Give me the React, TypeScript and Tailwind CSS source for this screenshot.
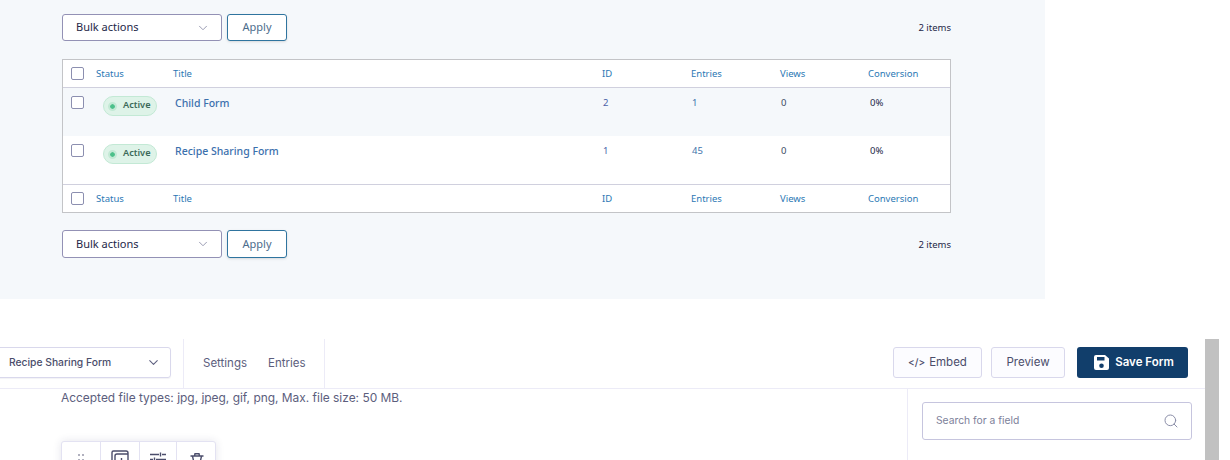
import { ChevronDown, Search } from 'lucide-react';

const columns = 'grid grid-cols-[33px_77px_429px_89px_89px_88px_1fr]';

const forms = [
  { title: 'Child Form', id: '2', entries: '1', views: '0', conversion: '0%', striped: true },
  { title: 'Recipe Sharing Form', id: '1', entries: '45', views: '0', conversion: '0%', striped: false },
];

function Checkbox() {
  return <span className="block ml-[8px] w-[13px] h-[13px] bg-white rounded-[2px] border border-[#8c8fb0]" />;
}

function Toolbar({ className, height, countClass }: { className: string; height: string; countClass: string }) {
  return (
    <div className={`flex items-center pr-[94px] ${className}`}>
      <div className={`flex items-center justify-between w-[160px] ${height} bg-white border border-[#9391b5] rounded-[3px] pl-[13px] pr-[11px] text-[11px] text-[#242748]`}>
        <span>Bulk actions</span>
        <ChevronDown size={14} strokeWidth={1.5} className="text-[#8b8ea8]" />
      </div>
      <button className={`ml-[5px] w-[60px] ${height} bg-white border border-[#2f749f] rounded-[3px] text-[11px] text-[#4c6c8c] shadow-sm`}>
        Apply
      </button>
      <span className={`ml-auto text-[9.5px] text-[#242748] ${countClass}`}>2 items</span>
    </div>
  );
}

function HeaderRow({ className }: { className: string }) {
  return (
    <div className={`${columns} items-center h-[28px] text-[9.5px] text-[#2b78b4] ${className}`}>
      <Checkbox />
      <span className="pt-[2px]">Status</span>
      <span className="pt-[2px]">Title</span>
      <span className="pt-[2px]">ID</span>
      <span className="pt-[2px]">Entries</span>
      <span className="pt-[2px]">Views</span>
      <span className="pt-[2px]">Conversion</span>
    </div>
  );
}

function FormRow({ form }: { form: (typeof forms)[number] }) {
  return (
    <div className={`${columns} h-[48px] pt-[8px] text-[9.5px] ${form.striped ? 'bg-[#f5f8fb]' : 'bg-white'}`}>
      <Checkbox />
      <div className="pl-[7px]">
        <span className="flex items-center w-[54px] h-[20px] bg-[#def3e8] border border-[#c3e9d5] rounded-full pl-[6px] pb-[2px] text-[9.2px] font-semibold text-[#3c6a5a]">
          <span className="w-[5px] h-[5px] mt-[2px] mr-[8px] rounded-full bg-[#4cc08a] outline-2 outline-[#c3e9d5]" />
          Active
        </span>
      </div>
      <span className="pl-[2px] text-[10.5px] font-medium text-[#3b70ad] leading-[14px]">{form.title}</span>
      <span className="pl-[1px] leading-[14px] text-[#4a63a8]">{form.id}</span>
      <span className="pl-[1px] leading-[14px] text-[#3e73ab]">{form.entries}</span>
      <span className="pl-[1px] leading-[14px] text-[#3c4a63]">{form.views}</span>
      <span className="pl-[2px] leading-[14px] text-[#242748]">{form.conversion}</span>
    </div>
  );
}

function ToolButton({ children, wide }: { children: React.ReactNode; wide?: boolean }) {
  return (
    <div className={`flex justify-center h-[40px] border-r border-[#e3e2f2] last:border-r-0 ${wide ? 'w-[39px]' : 'w-[38px]'}`}>
      {children}
    </div>
  );
}

export default function App() {
  return (
    <div className="w-[1230px] h-[460px] overflow-hidden bg-white font-['Inter',sans-serif]">
      {/* Forms list */}
      <div className="w-[1045px] h-[299px] pl-[62px] pt-[14px] bg-[#f5f8fb] font-['Noto_Sans',sans-serif]">
        <Toolbar className="" height="h-[27px]" countClass="pt-[2px]" />
        <div className="w-[889px] mt-[18px] bg-white border border-[#c3c4c7]">
          <HeaderRow className="border-b border-[#d0d0de]" />
          {forms.map((form) => (
            <FormRow key={form.id} form={form} />
          ))}
          <HeaderRow className="border-t border-[#d0d0de]" />
        </div>
        <Toolbar className="mt-[17px]" height="h-[28px]" countClass="pt-[3px]" />
      </div>

      {/* Form editor */}
      <div className="flex mt-[40px] h-[121px]">
        <div className="w-[1205px] shrink-0">
          <div className="flex items-center h-[50px] border-b border-[#ecebf7]">
            <div className="flex items-center justify-between w-[180px] h-[31px] -ml-[9px] mb-[2px] shrink-0 border border-[#d9d8ec] rounded-[3px] pl-[17px] pr-[9px] text-[10.3px] font-medium text-[#4b4d6b] shadow-[0_1px_1px_rgba(40,40,90,0.06)]">
              <span>Recipe Sharing Form</span>
              <ChevronDown size={15} strokeWidth={1.7} className="text-[#5f6180]" />
            </div>
            <div className="flex items-center gap-[21px] h-full ml-[12px] w-[142px] pl-[19px] border-x border-[#ecebf7] text-[11.5px] text-[#5c5e7d]">
              <span>Settings</span>
              <span>Entries</span>
            </div>
            <div className="flex items-center ml-auto mb-[2px] pr-[17px] text-[11.5px] text-[#4b4d6b]">
              <button className="flex items-center justify-center gap-[4px] w-[89px] h-[31px] bg-[#fcfcff] border border-[#d9d8ec] rounded-[3px]">
                <span className="text-[10px] font-medium">&lt;/&gt;</span>
                Embed
              </button>
              <button className="ml-[9px] w-[74px] h-[31px] bg-[#fcfcff] border border-[#d9d8ec] rounded-[3px]">Preview</button>
              <button className="flex items-center justify-center gap-[6px] ml-[12px] pl-[3px] w-[111px] h-[31px] bg-[#113e6b] rounded-[3px] font-semibold text-white">
                <svg width="15" height="15" viewBox="0 0 15 15" fill="white">
                  <path fillRule="evenodd" d="M2 0h9l4 3.5V13a2 2 0 0 1-2 2H2a2 2 0 0 1-2-2V2a2 2 0 0 1 2-2Zm1 2v3.5h7.5V2H3Zm4.5 6.5a2.3 2.3 0 1 0 0 4.6 2.3 2.3 0 0 0 0-4.6Z" />
                </svg>
                Save Form
              </button>
            </div>
          </div>
          <div className="flex h-[71px]">
            <div className="w-[907px] shrink-0 pl-[61px] pt-[1px]">
              <p className="text-[11.93px] leading-[16px] text-[#5c5e7d]">Accepted file types: jpg, jpeg, gif, png, Max. file size: 50 MB.</p>
              <div className="flex w-[155px] mt-[35px] bg-white border border-[#e3e2f2] rounded-[3px] shadow-[0_0_8px_rgba(40,40,90,0.12)]">
                <ToolButton wide>
                  <svg width="6" height="8" viewBox="0 0 6 8" fill="#4b4d6b" className="mt-[12px]">
                    <circle cx="1" cy="1" r="0.8" />
                    <circle cx="5" cy="1" r="0.8" />
                    <circle cx="1" cy="6" r="0.8" />
                    <circle cx="5" cy="6" r="0.8" />
                  </svg>
                </ToolButton>
                <ToolButton wide>
                  <svg width="18" height="18" viewBox="0 0 18 18" fill="none" stroke="#4b4d6b" strokeWidth="1.4" className="mt-[8px]">
                    <path d="M3 13.5H2.5a1.5 1.5 0 0 1-1.5-1.5V2.5A1.5 1.5 0 0 1 2.5 1H15a2 2 0 0 1 2 2v12a2 2 0 0 1-2 2H6a2 2 0 0 1-2-2V6a2 2 0 0 1 2-2h11" />
                    <path d="M10.5 8v6M7.5 11h6" />
                  </svg>
                </ToolButton>
                <ToolButton>
                  <svg width="16" height="14" viewBox="0 0 16 14" fill="none" stroke="#4b4d6b" strokeWidth="1.4" className="mt-[10px]">
                    <path d="M0 2.5h9M12 2.5h4M0 7.5h3M6 7.5h10M10.5 0.5v4M4.5 5.5v4" />
                  </svg>
                </ToolButton>
                <ToolButton>
                  <svg width="14" height="16" viewBox="0 0 14 16" fill="none" stroke="#4b4d6b" strokeWidth="1.4" className="mt-[11px] ml-[1px]">
                    <path d="M0.5 3h13M4.5 3 5 .8h4l.5 2.2M2.5 3l1.5 7v5h6v-5l1.5-7" />
                  </svg>
                </ToolButton>
              </div>
            </div>
            <div className="flex-1 pl-[14px] pt-[13px] border-l border-[#ecebf7]">
              <div className="flex items-center justify-between w-[270px] h-[38px] border border-[#c6c5de] rounded-[3px] pl-[13px] pr-[12px] text-[10.3px] text-[#7d7f9a]">
                <span>Search for a field</span>
                <Search size={16} strokeWidth={1.5} className="text-[#8b8ea8]" />
              </div>
            </div>
          </div>
        </div>
        <div className="w-[14px] shrink-0 bg-[#c1c1c1]" />
      </div>
    </div>
  );
}
